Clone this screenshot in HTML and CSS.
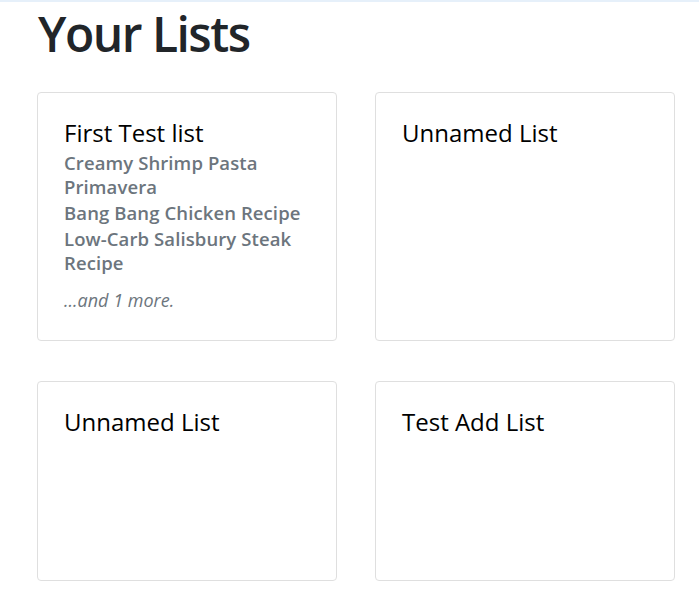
FILE: index.html
```html
<!DOCTYPE html>
<html>
<head>
<meta charset="utf-8">
<link rel="stylesheet" href="styles.css">
</head>
<body>
<div class="topline"></div>
<main class="page">
  <h1 class="title">Your Lists</h1>
  <div class="grid">
    <div class="card">
      <h4 class="card-title">First Test list</h4>
      <h6 class="item">Creamy Shrimp Pasta Primavera</h6>
      <h6 class="item">Bang Bang Chicken Recipe</h6>
      <h6 class="item">Low-Carb Salisbury Steak Recipe</h6>
      <p class="more">...and 1 more.</p>
    </div>
    <div class="card">
      <h4 class="card-title">Unnamed List</h4>
    </div>
    <div class="card">
      <h4 class="card-title">Unnamed List</h4>
    </div>
    <div class="card">
      <h4 class="card-title">Test Add List</h4>
    </div>
  </div>
</main>
</body>
</html>
```
FILE: styles.css
```css
html, body {
  margin: 0;
  padding: 0;
  background: #fff;
}
body {
  font-family: "Open Sans", "Noto Sans", sans-serif;
  color: #212529;
}
.topline {
  height: 2px;
  background: #e6f0fa;
}
.page {
  padding: 0 0 0 37px;
}
.title {
  margin: 0;
  font-size: 48px;
  font-weight: 600;
  line-height: 64px;
  padding-left: 1px;
  letter-spacing: -1.5px;
}
.grid {
  display: grid;
  grid-template-columns: 300px 300px;
  grid-template-rows: 249px 200px;
  column-gap: 38px;
  row-gap: 40px;
  margin-top: 26px;
}
.card {
  border: 1px solid #dfdfdf;
  border-radius: 4px;
  padding: 23px 26px;
  box-sizing: border-box;
}
.card-title {
  margin: 0 0 1px 0;
  font-size: 24px;
  font-weight: 400;
  line-height: 34px;
  color: #000;
}
.item {
  margin: 0 0 2px 0;
  font-size: 18.5px;
  font-weight: 600;
  line-height: 24px;
  letter-spacing: 0.1px;
  color: #6c757d;
}
.more {
  margin: 13px 0 0 0;
  font-size: 18px;
  font-style: italic;
  line-height: 24px;
  color: #6c757d;
}
```
